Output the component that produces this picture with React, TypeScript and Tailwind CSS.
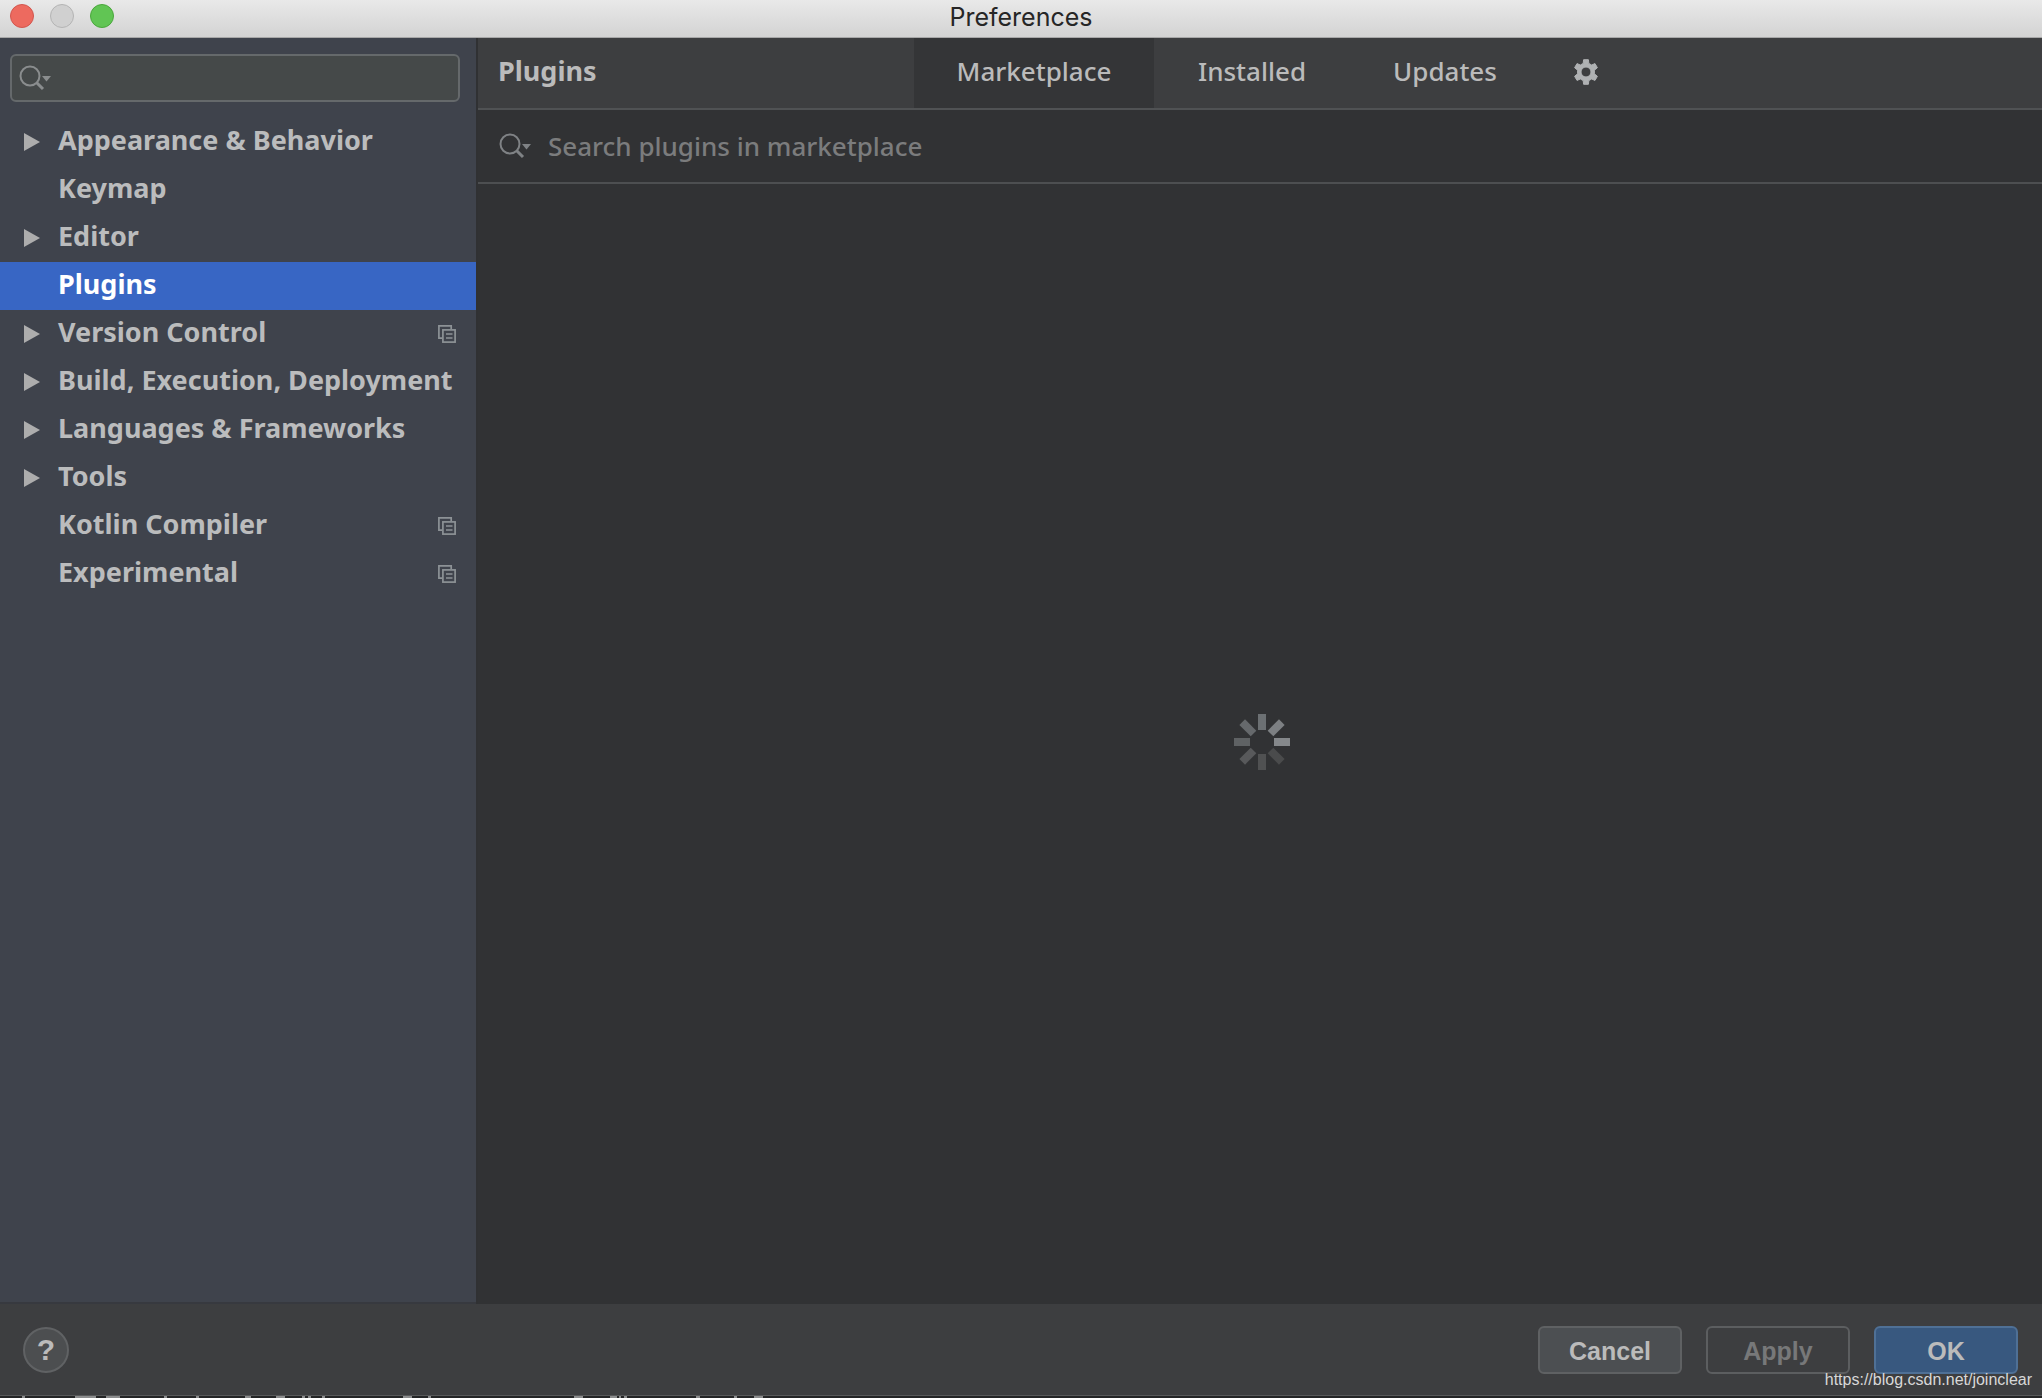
import clsx from "clsx";

type TreeItem = {
    label: string;
    expandable?: boolean;
    project?: boolean;
};

const TREE: TreeItem[] = [
    { label: "Appearance & Behavior", expandable: true },
    { label: "Keymap" },
    { label: "Editor", expandable: true },
    { label: "Plugins" },
    { label: "Version Control", expandable: true, project: true },
    { label: "Build, Execution, Deployment", expandable: true },
    { label: "Languages & Frameworks", expandable: true },
    { label: "Tools", expandable: true },
    { label: "Kotlin Compiler", project: true },
    { label: "Experimental", project: true },
];

const TABS = [
    { label: "Marketplace", width: "w-[240px]" },
    { label: "Installed", width: "w-[196px]" },
    { label: "Updates", width: "w-[190px]" },
];

// clockwise from the top
const SPOKES = ["#6c7073", "#7d8083", "#85888b", "#4a4b4c", "#505152", "#58595b", "#5f6264", "#66696c"];

// [x, width] of the bits of the window behind that peek out under the dialog
const PEEKS = [
    [22, 3], [75, 21], [106, 14], [164, 3], [196, 3], [245, 6], [276, 9], [302, 3], [308, 3], [322, 3],
    [403, 9], [428, 3], [574, 9], [610, 7], [619, 2], [624, 3], [696, 4], [734, 3], [754, 9],
];

const App = () => {
    return (
        <div className="flex h-screen flex-col overflow-hidden bg-[#3c3e40] font-['Noto_Sans',sans-serif] text-[#bbbbbb]">
            <TitleBar />
            <div className="flex min-h-0 flex-1">
                <Sidebar />
                <PluginsPanel />
            </div>
            <Footer />
            <StatusStrip />
        </div>
    );
};

export default App;

function TitleBar() {
    return (
        <header className="relative flex h-[38px] shrink-0 justify-center border-b border-[#a8a8a8] bg-linear-to-b from-[#e9e9e9] to-[#d3d3d3]">
            <div className="absolute top-1 left-2.5 flex gap-4">
                <button aria-label="Close" className="size-6 rounded-full border border-[#d2564e] bg-[#ed6a5f]" />
                <button aria-label="Minimize" className="size-6 rounded-full border border-[#b4b4b4] bg-[#d0d0d0]" />
                <button aria-label="Zoom" className="size-6 rounded-full border border-[#4aa73c] bg-[#61c554]" />
            </div>
            <h1 className="font-[Inter,sans-serif] text-[25px] leading-[34px] text-[#262626]">Preferences</h1>
        </header>
    );
}

function Sidebar() {
    return (
        <aside className="w-[476px] shrink-0 border-b-2 border-[#37393f] bg-[#3f434c]">
            <label className="mt-4 ml-2.5 flex h-12 w-[450px] items-center rounded-md border-2 border-[#65696b] bg-[#454949] pl-[7px]">
                <SearchIcon className="text-[#8a8d8e]" />
                <input aria-label="Search settings" className="min-w-0 flex-1 bg-transparent px-2 outline-none" />
            </label>
            <ul className="mt-4">
                {TREE.map((item) => (
                    <li key={item.label}>
                        <button
                            className={clsx(
                                "flex h-12 w-full items-center pr-5 pl-6 text-left text-[27px] leading-[44px] font-bold whitespace-nowrap",
                                item.label === "Plugins" ? "bg-[#3866c4] text-white" : "text-[#bbbcbd]"
                            )}
                        >
                            <span className="flex w-[34px] shrink-0">
                                {item.expandable && (
                                    <svg width="16" height="18" viewBox="0 0 16 18" fill="#adadad">
                                        <path d="M0 0L16 9L0 18Z" />
                                    </svg>
                                )}
                            </span>
                            <span className="flex-1 pb-1">{item.label}</span>
                            {item.project && <ProjectIcon />}
                        </button>
                    </li>
                ))}
            </ul>
        </aside>
    );
}

function PluginsPanel() {
    return (
        <main className="flex min-w-0 flex-1 flex-col border-l-2 border-[#303133] bg-[#313234]">
            <div className="flex h-[72px] shrink-0 items-stretch border-b-2 border-[#505254] bg-[#3d3e40] leading-[66px]">
                <h2 className="w-[436px] pl-5 text-[27px] font-bold">Plugins</h2>
                <nav className="flex text-[26px] font-medium">
                    {TABS.map((tab) => (
                        <button
                            key={tab.label}
                            className={clsx("pb-1 text-center", tab.width, tab.label === "Marketplace" && "bg-[#343537]")}
                        >
                            {tab.label}
                        </button>
                    ))}
                </nav>
                <button aria-label="Plugin settings" className="ml-[26px] w-10 pb-0.5">
                    <GearIcon />
                </button>
            </div>
            <label className="flex h-[74px] shrink-0 items-center border-b-2 border-[#4d4f51] pl-[21px]">
                <SearchIcon className="text-[#7f8285]" />
                <input
                    placeholder="Search plugins in marketplace"
                    className="min-w-0 flex-1 bg-transparent pl-[15px] text-[26px] leading-[48px] font-medium outline-none placeholder:text-[#7b7c7d]"
                />
            </label>
            <div className="flex flex-1 items-center justify-center pb-1 pl-1">
                <Spinner />
            </div>
        </main>
    );
}

function Footer() {
    const button = "h-12 w-36 rounded-md border-2 font-['Liberation_Sans',sans-serif] text-[25px] leading-[46px] font-bold";

    return (
        <footer className="flex h-[92px] shrink-0 items-center justify-between border-b border-[#58595a] bg-[#3d3e40] pr-6 pl-[23px]">
            <button
                aria-label="Help"
                className="size-[46px] rounded-full border-2 border-[#606264] bg-[#4c4e50] font-['Liberation_Sans',sans-serif] text-[30px] leading-[42px] font-bold"
            >
                ?
            </button>
            <div className="relative flex gap-6">
                <button className={clsx(button, "border-[#5f6163] bg-[#4c4f52]")}>Cancel</button>
                <button disabled className={clsx(button, "border-[#5c5e60] text-[#777879]")}>
                    Apply
                </button>
                <button className={clsx(button, "border-[#4f7096] bg-[#38587f]")}>OK</button>
                <span className="absolute top-11 -right-3.5 font-['Liberation_Sans',sans-serif] text-base leading-5 whitespace-nowrap text-[#d8d8d8]">
                    https://blog.csdn.net/joinclear
                </span>
            </div>
        </footer>
    );
}

function StatusStrip() {
    return (
        <div className="h-0.5 shrink-0 bg-[#242526]">
            <svg width="800" height="2" viewBox="0 0 800 2" fill="#8c8d8e" className="block">
                {PEEKS.map(([x, width]) => (
                    <rect key={x} x={x} y="0" width={width} height="2" />
                ))}
            </svg>
        </div>
    );
}

function SearchIcon({ className }: { className: string }) {
    return (
        <svg width="34" height="26" viewBox="0 0 34 26" fill="none" className={className}>
            <circle cx="11" cy="11" r="9.5" stroke="currentColor" strokeWidth="2" />
            <path d="M17.5 17.5L24 24" stroke="currentColor" strokeWidth="3" />
            <path d="M23 11H32L27.5 16.5Z" fill="currentColor" />
        </svg>
    );
}

function ProjectIcon() {
    return (
        <svg width="18" height="18" viewBox="0 0 18 18" fill="none" stroke="#8d9296" strokeWidth="1.7">
            <path d="M4 13.2H0.9V0.9H13.2V4" />
            <rect x="4.9" y="4.9" width="12.2" height="12.2" />
            <path d="M8 9H14.5M8 13H14.5" />
        </svg>
    );
}

function GearIcon() {
    return (
        <svg
            width="26"
            height="26"
            viewBox="0 0 26 26"
            fill="#afb1b3"
            stroke="#afb1b3"
            strokeWidth="1"
            strokeLinejoin="round"
            className="mx-auto"
        >
            <path
                fillRule="evenodd"
                d="M10.6 0.7H15.4L15.8 4.4L18.6 6L22 4.6L24.4 8.7L21.4 11.2V14.8L24.4 17.3L22 21.4L18.6 20L15.8 21.6L15.4 25.3H10.6L10.2 21.6L7.4 20L4 21.4L1.6 17.3L4.6 14.8V11.2L1.6 8.7L4 4.6L7.4 6L10.2 4.4ZM13 8A5 5 0 1 0 13 18A5 5 0 1 0 13 8Z"
            />
        </svg>
    );
}

function Spinner() {
    return (
        <svg width="56" height="56" viewBox="0 0 56 56">
            {SPOKES.map((color, i) => (
                <rect key={i} x="24" y="0" width="8" height="16" fill={color} transform={`rotate(${i * 45} 28 28)`} />
            ))}
        </svg>
    );
}
